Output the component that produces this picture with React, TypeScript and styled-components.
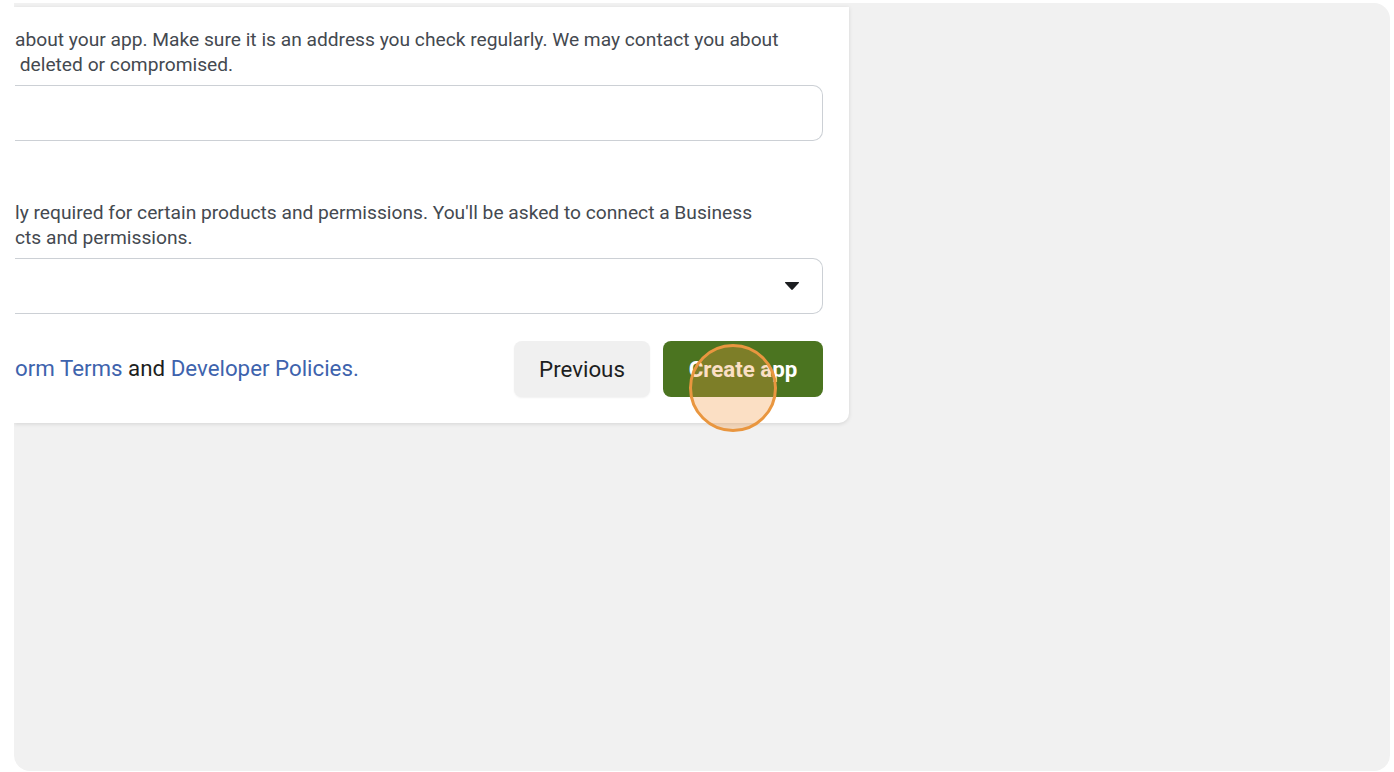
import React from "react";
import styled, { createGlobalStyle } from "styled-components";

const Global = createGlobalStyle`
  html, body { margin: 0; padding: 0; background: #ffffff; }
  body { font-family: Roboto, "Liberation Sans", Arial, sans-serif; overflow: hidden; }
  * { box-sizing: border-box; }
`;

const Panel = styled.div`
  margin: 3px 4px 0 14px;
  height: 768px;
  background: #f1f1f1;
  border-radius: 0 16px 16px 16px;
  overflow: hidden;
  display: flex;
  flex-direction: column;
  align-items: flex-start;
  padding-top: 4px;
`;

const Card = styled.div`
  width: 835px;
  background: #ffffff;
  border-radius: 0 0 10px 0;
  box-shadow: 0 1px 4px rgba(0, 0, 0, 0.12);
  padding: 20px 26px 26px 1px;
  display: flex;
  flex-direction: column;
`;

const Section = styled.div<{ $gapTop?: number }>`
  display: flex;
  flex-direction: column;
  gap: 8px;
  margin-top: ${(p) => p.$gapTop ?? 0}px;
`;

const Desc = styled.p`
  margin: 0;
  font-size: 19.2px;
  line-height: 25px;
  color: #444950;
  white-space: pre;
`;

const Field = styled.div`
  height: 56px;
  border: 1px solid #ccd0d5;
  border-left: none;
  border-radius: 0 10px 10px 0;
  background: #fff;
  display: flex;
  align-items: center;
  justify-content: flex-end;
  padding-right: 22px;
`;

const Footer = styled.div`
  margin-top: 27px;
  display: flex;
  align-items: center;
  justify-content: space-between;
`;

const Legal = styled.p`
  margin: 0 0 2px 0;
  font-size: 22.3px;
  line-height: 28px;
  color: #1c1e21;
`;

const Link = styled.span`
  color: #3e63ad;
`;

const Buttons = styled.div`
  display: flex;
  gap: 13px;
  position: relative;
`;

const Button = styled.button<{ $primary?: boolean; $w: number }>`
  width: ${(p) => p.$w}px;
  height: 56px;
  border: none;
  border-radius: 8px;
  font-family: Roboto, "Liberation Sans", Arial, sans-serif;
  font-size: 22.3px;
  font-weight: ${(p) => (p.$primary ? 700 : 400)};
  color: ${(p) => (p.$primary ? "#ffffff" : "#1c1e21")};
  background: ${(p) => (p.$primary ? "#4b7420" : "#f0f0f0")};
  box-shadow: ${(p) => (p.$primary ? "none" : "0 1px 2px rgba(0,0,0,0.06)")};
  padding: 0;
`;

const Click = styled.div`
  position: absolute;
  left: 175px;
  top: 3px;
  width: 88px;
  height: 88px;
  border-radius: 50%;
  border: 3px solid #e9963f;
  background: rgba(242, 150, 60, 0.3);
  pointer-events: none;
`;

const Caret = () => (
  <svg width="16" height="10" viewBox="0 0 16 10">
    <path d="M1.5 1 H14.5 Q15.5 1 14.8 1.9 L8.8 8.6 Q8 9.4 7.2 8.6 L1.2 1.9 Q0.5 1 1.5 1 Z" fill="#1c1e21" />
  </svg>
);

export default function App() {
  return (
    <>
      <Global />
      <Panel>
        <Card>
          <Section>
            <Desc>{"about your app. Make sure it is an address you check regularly. We may contact you about\n deleted or compromised."}</Desc>
            <Field />
          </Section>
          <Section $gapTop={59}>
            <Desc>{"ly required for certain products and permissions. You'll be asked to connect a Business\ncts and permissions."}</Desc>
            <Field>
              <Caret />
            </Field>
          </Section>
          <Footer>
            <Legal>
              <Link>orm Terms</Link> and <Link>Developer Policies.</Link>
            </Legal>
            <Buttons>
              <Button $w={136}>Previous</Button>
              <Button $w={160} $primary>Create app</Button>
              <Click />
            </Buttons>
          </Footer>
        </Card>
      </Panel>
    </>
  );
}
